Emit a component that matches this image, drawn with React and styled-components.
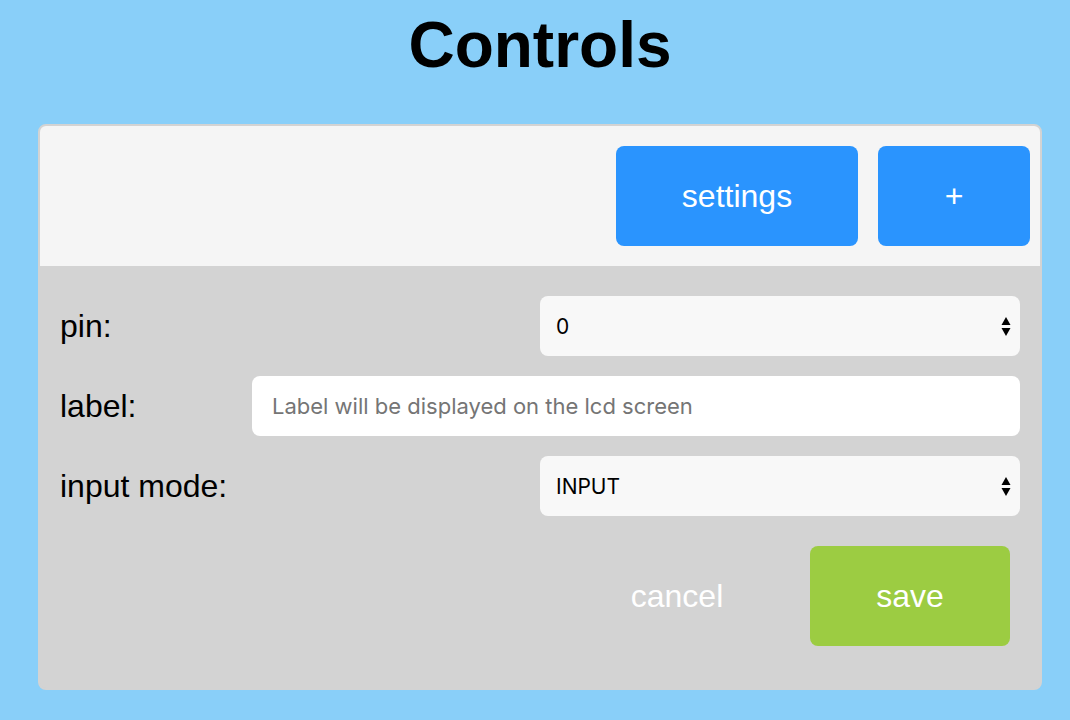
import React from "react";
import styled, { createGlobalStyle } from "styled-components";

const Global = createGlobalStyle`
  html, body { margin: 0; padding: 0; }
  body {
    background: #89cff9;
    font-family: "Liberation Sans", Arial, Helvetica, sans-serif;
    color: #000;
  }
  * { box-sizing: border-box; }
`;

const Page = styled.div`
  display: flex;
  flex-direction: column;
  padding: 0 28px 0 38px;
  min-height: 720px;
`;

const Title = styled.h1`
  margin: 0;
  padding-top: 13px;
  height: 124px;
  font-size: 64px;
  line-height: 64px;
  font-weight: 700;
  text-align: center;
`;

const Panel = styled.section`
  width: 1004px;
  border: 2px solid #d3d3d3;
  border-radius: 8px;
  overflow: hidden;
  background: #d3d3d3;
`;

const Header = styled.div`
  display: flex;
  justify-content: flex-end;
  gap: 20px;
  padding: 20px 10px 20px;
  background: #f5f5f5;
`;

const Button = styled.button`
  width: ${(p) => p.$w}px;
  height: 100px;
  border: none;
  border-radius: 8px;
  background: ${(p) => p.$bg || "transparent"};
  color: #fff;
  font-family: "Liberation Sans", Arial, Helvetica, sans-serif;
  font-size: 32px;
  padding: 0;
  cursor: pointer;
`;

const Body = styled.div`
  display: flex;
  flex-direction: column;
  gap: 20px;
  padding: 30px 20px 42px;
`;

const Row = styled.div`
  display: flex;
  align-items: center;
  justify-content: space-between;
`;

const Label = styled.label`
  font-size: 32px;
`;

const SelectWrap = styled.div`
  position: relative;
  width: 50%;
  height: 60px;
`;

const Select = styled.select`
  appearance: none;
  -webkit-appearance: none;
  width: 100%;
  height: 60px;
  border: none;
  border-radius: 8px;
  background: #f8f8f8;
  padding: 0 30px 0 16px;
  font-family: Inter, "Noto Sans", sans-serif;
  font-size: 21px;
  color: #000;
  outline: none;
`;

const Arrows = styled.svg`
  position: absolute;
  right: 9px;
  top: 21px;
  pointer-events: none;
`;

const TextInput = styled.input`
  width: 80%;
  height: 60px;
  border: none;
  border-radius: 8px;
  background: #fff;
  padding: 0 20px;
  font-family: Inter, "Noto Sans", sans-serif;
  font-size: 22px;
  color: #000;
  outline: none;
  &::placeholder { color: #757575; }
`;

const Actions = styled.div`
  display: flex;
  justify-content: flex-end;
  align-items: center;
  gap: 43px;
  padding: 10px 10px 0 0;
`;

function SelectField({ options, value }) {
  return (
    <SelectWrap>
      <Select defaultValue={value}>
        {options.map((o) => (
          <option key={o} value={o}>{o}</option>
        ))}
      </Select>
      <Arrows width="10" height="19" viewBox="0 0 10 19">
        <path d="M5 0 L9.5 8 L0.5 8 Z" fill="#000" />
        <path d="M5 19 L9.5 11 L0.5 11 Z" fill="#000" />
      </Arrows>
    </SelectWrap>
  );
}

export default function App() {
  return (
    <>
      <Global />
      <Page>
        <Title>Controls</Title>
        <Panel>
          <Header>
            <Button $w={242} $bg="#2a94fe">settings</Button>
            <Button $w={152} $bg="#2a94fe">+</Button>
          </Header>
          <Body>
            <Row>
              <Label>pin:</Label>
              <SelectField options={["0", "1", "2", "3"]} value="0" />
            </Row>
            <Row>
              <Label>label:</Label>
              <TextInput placeholder="Label will be displayed on the lcd screen" />
            </Row>
            <Row>
              <Label>input mode:</Label>
              <SelectField options={["INPUT", "INPUT_PULLUP", "OUTPUT"]} value="INPUT" />
            </Row>
            <Actions>
              <Button $w={180}>cancel</Button>
              <Button $w={200} $bg="#9ccc42">save</Button>
            </Actions>
          </Body>
        </Panel>
      </Page>
    </>
  );
}
